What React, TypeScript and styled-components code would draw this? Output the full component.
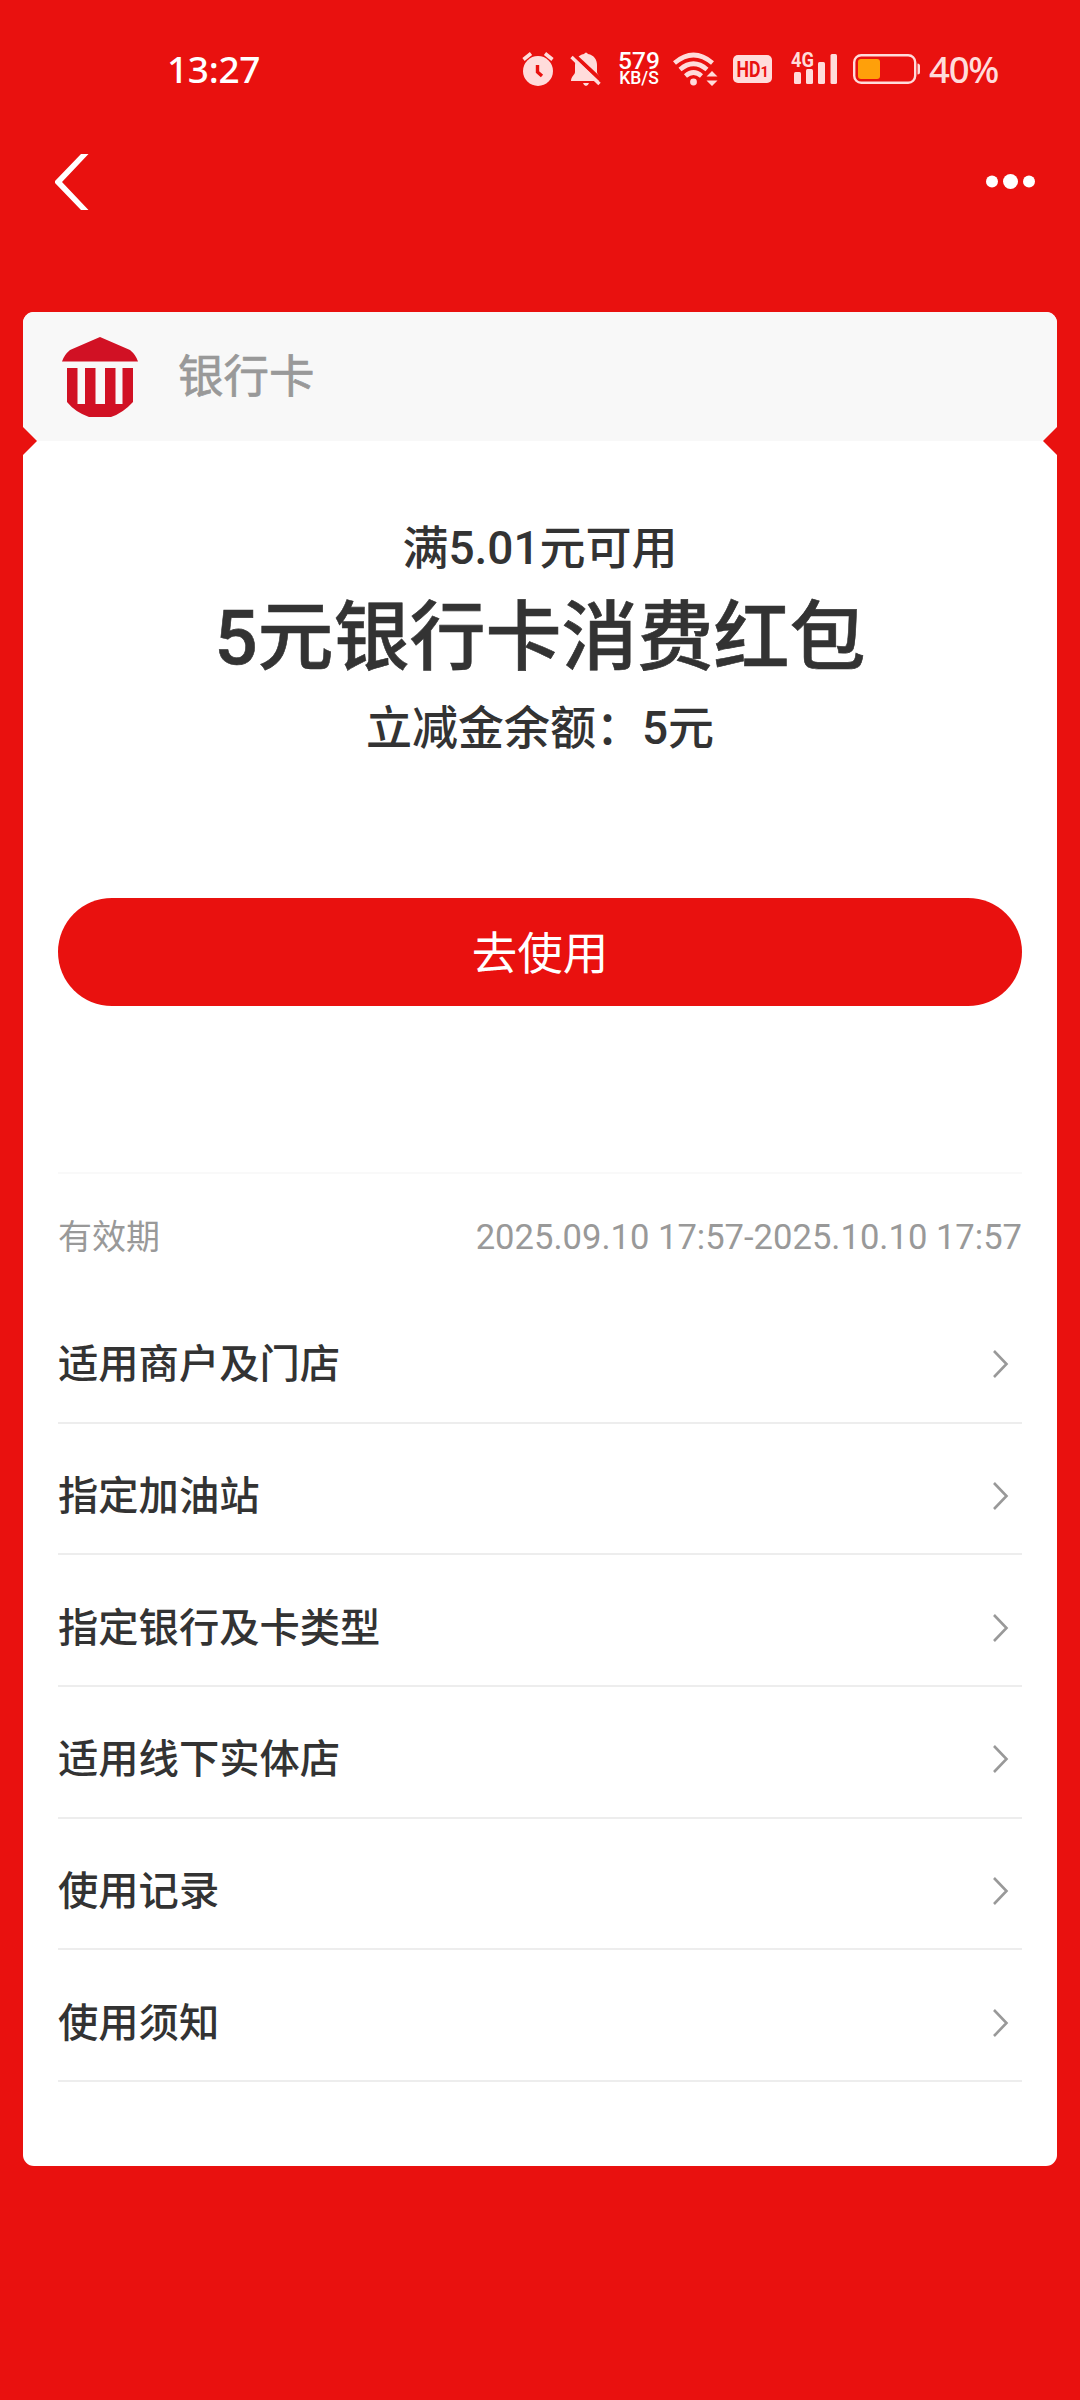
import React from "react";
import styled, { createGlobalStyle } from "styled-components";

const RED = "#e9110f";
const TINT = "#ffdcdb";
const CJK = `Roboto, "Noto Sans CJK SC", sans-serif`;

const GlobalStyle = createGlobalStyle`
  * { box-sizing: border-box; }
  body { margin: 0; background: ${RED}; }
`;

const Page = styled.main`
  width: 1080px;
  height: 2400px;
  background: ${RED};
  font-family: ${CJK};
  color: #333;
  overflow: hidden;
`;

const StatusBar = styled.header`
  height: 138px;
  padding: 0 80px 0 167px;
  display: flex;
  justify-content: space-between;
  align-items: center;
  font-family: "Noto Sans", sans-serif;
`;

const Clock = styled.time`
  font-size: 37px;
  line-height: 40px;
  font-weight: 500;
  letter-spacing: -0.3px;
  color: #fff;
`;

const StatusIcons = styled.div`
  display: flex;
  align-items: center;
  height: 40px;
  color: ${TINT};
`;

const Glyph = styled.svg<{ $gap?: number }>`
  display: block;
  flex: none;
  overflow: visible;
  margin-right: ${(p) => p.$gap ?? 0}px;
`;

const NetSpeed = styled.div`
  width: 44px;
  margin-right: 12px;
  display: flex;
  flex-direction: column;
  align-items: center;
  color: #fff;
  font-family: Roboto, sans-serif;
  font-weight: 500;
`;

const SpeedValue = styled.span`
  font-size: 24.5px;
  line-height: 19px;
`;

const SpeedUnit = styled.span`
  font-size: 17.5px;
  line-height: 17px;
`;

const Percent = styled.span`
  width: 71px;
  font-size: 36.5px;
  line-height: 40px;
  font-weight: 500;
  letter-spacing: -1.2px;
  white-space: nowrap;
`;

const NavBar = styled.nav`
  height: 174px;
  padding: 14px 44px 0 53px;
  display: flex;
  justify-content: space-between;
  align-items: flex-start;
`;

const IconButton = styled.button`
  height: 60px;
  padding: 0;
  border: 0;
  background: none;
  display: flex;
  align-items: center;
`;

const Card = styled.section`
  position: relative;
  width: 1034px;
  height: 1854px;
  margin: 0 auto;
  border-radius: 11px;
  background: #fff;
`;

const CardHead = styled.div`
  height: 129px;
  padding: 0 39px;
  border-radius: 11px 11px 0 0;
  background: #f8f8f8;
  display: flex;
  align-items: center;
  gap: 40px;
`;

const BankName = styled.h2`
  margin: 0;
  padding-top: 3px;
  font-size: 45.5px;
  line-height: 60px;
  font-weight: 400;
  -webkit-text-stroke: 0.7px #999;
  color: #999;
`;

const Notch = styled.i<{ $side: "left" | "right" }>`
  position: absolute;
  top: 115px;
  ${(p) => p.$side}: 0;
  width: 14px;
  height: 28px;
  background: ${RED};
  clip-path: ${(p) =>
    p.$side === "left"
      ? "polygon(0 0, 100% 50%, 0 100%)"
      : "polygon(100% 0, 0 50%, 100% 100%)"};
`;

const CardBody = styled.div`
  padding: 0 35px;
`;

const Offer = styled.div`
  height: 457px;
  padding-top: 72px;
  display: flex;
  flex-direction: column;
  align-items: center;
  font-weight: 500;
`;

const OfferNote = styled.p`
  margin: 0;
  font-size: 46px;
  line-height: 70px;
`;

const OfferTitle = styled.h1`
  margin: 0;
  font-size: 76px;
  line-height: 110px;
  font-weight: 500;
  -webkit-text-stroke: 0.6px #333;
`;

const UseButton = styled.button`
  display: block;
  width: 100%;
  height: 108px;
  padding: 0 0 5px;
  border: 0;
  border-radius: 54px;
  background: ${RED};
  color: #fff;
  font-family: inherit;
  font-size: 45.5px;
  font-weight: 400;
`;

const Validity = styled.div`
  margin-top: 166px;
  height: 120px;
  padding-top: 38px;
  border-top: 2px solid #f9f9f9;
  display: flex;
  justify-content: space-between;
  font-size: 34px;
  line-height: 50px;
  color: #999;
`;

const ValidRange = styled.time`
  font-size: 34.6px;
`;

const Menu = styled.ul`
  margin: 0;
  padding: 0;
  list-style: none;
`;

const MenuRow = styled.li`
  height: 131.7px;
  padding: 15px 12px 0 0;
  border-bottom: 2px solid #ededed;
  display: flex;
  justify-content: space-between;
  align-items: center;
  font-size: 40.3px;
  line-height: 60px;
  font-weight: 500;
`;

const MenuLabel = styled.span`
  padding-top: 2px;
`;

const BankLogo = () => (
  <Glyph width="76" height="80" viewBox="0 0 76 80">
    <path
      fill="#d11124"
      d="M38 0 68 13Q74 18 76 24.500H0Q2 18 8 13ZM5 31H15.500V67H23V31H33.500V67H43V31H53.500V67H60.500V31H71V65Q61 76 49 80H27Q13 75 5 65Z"
    />
  </Glyph>
);

const AlarmIcon = () => (
  <Glyph $gap={16} width="32" height="36" viewBox="0 0 32 36" fill="none">
    <circle cx="16" cy="20" r="15" fill="currentColor" />
    <path d="M1.500 8.500 9 2.500M30.500 8.500 23 2.500" stroke="currentColor" strokeWidth="3.600" />
    <path d="M15.500 14V21L20 25" stroke={RED} strokeWidth="3.400" />
  </Glyph>
);

const MutedBellIcon = () => (
  <Glyph $gap={15} width="32" height="36" viewBox="0 0 32 36">
    <path
      fill="currentColor"
      d="M14 3Q16 0 18 3C24 4 27 9 27 14V21C27 24 31 25 31 30H1C1 25 5 24 5 21V14C5 9 8 4 14 3ZM13 32H19Q18 35 16 35T13 32Z"
    />
    <path d="M3 3 33 31" stroke={RED} strokeWidth="4" />
    <path d="M1.500 6 29.500 33" stroke="currentColor" strokeWidth="3.400" />
  </Glyph>
);

const WifiIcon = () => (
  <Glyph $gap={15} width="45" height="36" viewBox="0 0 45 36" fill="none">
    <g stroke="currentColor" strokeWidth="4.600">
      <path d="M1.500 12Q20.500-4 39.500 12" />
      <path d="M7 18.500Q20.500 7 34 18.500" />
      <path d="M12.500 25Q20.500 18 28.500 25" />
    </g>
    <circle cx="20.500" cy="31" r="3.400" fill="currentColor" />
    <path d="M39 20 44.500 25.500H33.500ZM39 35 44.500 29.500H33.500Z" fill="currentColor" />
  </Glyph>
);

const HdIcon = () => (
  <Glyph $gap={19} width="39" height="28" viewBox="0 0 39 28">
    <rect width="39" height="28" rx="5" fill="currentColor" />
    <g fill={RED} fontFamily="Roboto, sans-serif" fontWeight="700">
      <text x="3.500" y="22" fontSize="22.500" textLength="24" lengthAdjust="spacingAndGlyphs">HD</text>
      <text x="27.500" y="22" fontSize="14.500">1</text>
    </g>
  </Glyph>
);

const SignalIcon = () => (
  <Glyph $gap={15} width="47" height="36" viewBox="0 0 47 36" fill="currentColor">
    <text x="0" y="15.500" fontSize="20" fontWeight="700" fontFamily="Roboto, sans-serif" textLength="23" lengthAdjust="spacingAndGlyphs">4G</text>
    <rect x="3" y="21" width="7" height="12" rx="1.500" />
    <rect x="15" y="18" width="7" height="15" rx="1.500" />
    <rect x="27" y="11" width="7" height="22" rx="1.500" />
    <rect x="39.500" y="3" width="6.500" height="30" rx="1.500" />
  </Glyph>
);

const BatteryIcon = () => (
  <Glyph $gap={8} width="68" height="30" viewBox="0 0 68 30">
    <rect x="1.200" y="1.200" width="61" height="27.600" rx="7" fill="none" stroke="currentColor" strokeWidth="2.400" />
    <rect x="5" y="5" width="22" height="20" rx="3" fill="#ffa00a" />
    <path d="M64.500 9.500Q67 9.500 67 12V18Q67 20.500 64.500 20.500Z" fill="currentColor" />
  </Glyph>
);

const BackIcon = () => (
  <Glyph width="36" height="58" viewBox="0 0 36 58">
    <path d="M28 1H35.500L9 29 35.500 57H28L2 30V28Z" fill="#fff" />
  </Glyph>
);

const MoreIcon = () => (
  <Glyph width="50" height="16" viewBox="0 0 50 16" fill="#fff">
    <circle cx="6" cy="7.500" r="6" />
    <circle cx="24.500" cy="7.500" r="7.500" />
    <circle cx="43" cy="7.500" r="6" />
  </Glyph>
);

const ChevronIcon = () => (
  <Glyph width="18" height="30" viewBox="0 0 18 30" fill="none">
    <path d="M2 2 14.500 15 2 28" stroke="#999" strokeWidth="2.600" />
  </Glyph>
);

const MENU_ITEMS = [
  "适用商户及门店",
  "指定加油站",
  "指定银行及卡类型",
  "适用线下实体店",
  "使用记录",
  "使用须知",
];

export default function App() {
  return (
    <Page lang="zh-CN">
      <GlobalStyle />
      <StatusBar>
        <Clock>13:27</Clock>
        <StatusIcons>
          <AlarmIcon />
          <MutedBellIcon />
          <NetSpeed>
            <SpeedValue>579</SpeedValue>
            <SpeedUnit>KB/S</SpeedUnit>
          </NetSpeed>
          <WifiIcon />
          <HdIcon />
          <SignalIcon />
          <BatteryIcon />
          <Percent>40%</Percent>
        </StatusIcons>
      </StatusBar>
      <NavBar>
        <IconButton aria-label="返回">
          <BackIcon />
        </IconButton>
        <IconButton aria-label="更多">
          <MoreIcon />
        </IconButton>
      </NavBar>
      <Card>
        <CardHead>
          <BankLogo />
          <BankName>银行卡</BankName>
        </CardHead>
        <Notch $side="left" />
        <Notch $side="right" />
        <CardBody>
          <Offer>
            <OfferNote>满5.01元可用</OfferNote>
            <OfferTitle>5元银行卡消费红包</OfferTitle>
            <OfferNote>立减金余额：5元</OfferNote>
          </Offer>
          <UseButton>去使用</UseButton>
          <Validity>
            <span>有效期</span>
            <ValidRange>2025.09.10 17:57-2025.10.10 17:57</ValidRange>
          </Validity>
          <Menu>
            {MENU_ITEMS.map((label) => (
              <MenuRow key={label}>
                <MenuLabel>{label}</MenuLabel>
                <ChevronIcon />
              </MenuRow>
            ))}
          </Menu>
        </CardBody>
      </Card>
    </Page>
  );
}
